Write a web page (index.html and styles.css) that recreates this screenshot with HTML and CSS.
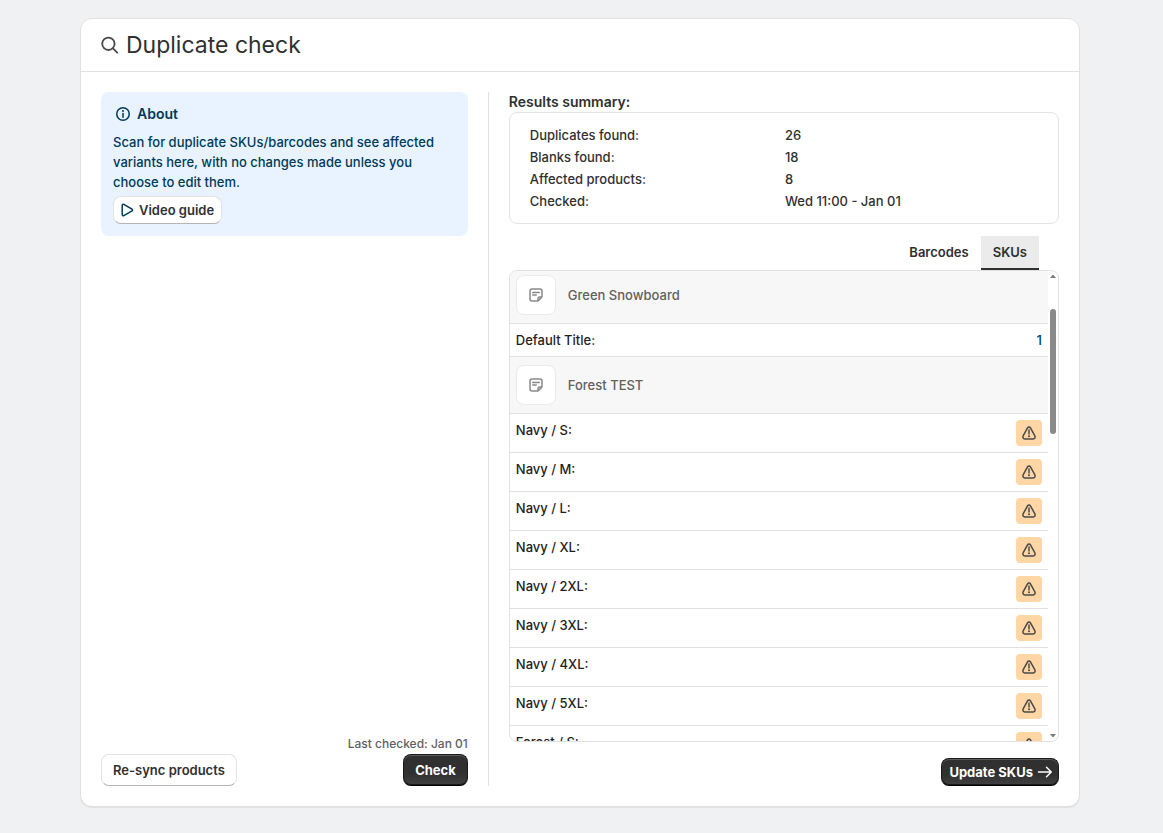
FILE: index.html
```
<!DOCTYPE html>
<html lang="en">
<head>
<meta charset="utf-8">
<meta name="viewport" content="width=device-width, initial-scale=1">
<title>Duplicate check</title>
<link rel="stylesheet" href="styles.css">
</head>
<body>
<svg class="sprite" aria-hidden="true">
  <symbol id="note" viewBox="0 0 20 20">
    <path d="M6 4h8a2 2 0 0 1 2 2v5.2c0 .5-.2 1-.6 1.4l-2.8 2.8c-.4.4-.9.6-1.4.6H6a2 2 0 0 1-2-2V6a2 2 0 0 1 2-2z"/>
    <path d="M6.75 7.5h6.5M6.75 10h3.5M12 15.5v-2c0-.8.7-1.5 1.5-1.5h2"/>
  </symbol>
  <symbol id="warn" viewBox="0 0 20 20">
    <path d="M10 7v4"/>
    <circle class="dot" cx="10" cy="13.2" r="1"/>
    <path d="M8.55 4.8c.65-1.1 2.25-1.1 2.9 0l4.3 7.9c.9 1.7 .1 3.2-1.6 3.2h-8.3c-1.7 0-2.5-1.5-1.6-3.2z"/>
  </symbol>
</svg>
<main class="card">
  <header class="card-header">
    <svg class="icon search-icon" viewBox="0 0 20 20"><circle cx="8.4" cy="8.8" r="6.2"/><path d="M13 13.4l4.2 4.2"/></svg>
    <h1 class="title">Duplicate check</h1>
  </header>
  <div class="card-body">
    <section class="side">
      <div class="about">
        <h2 class="about-title">
          <svg class="icon" viewBox="0 0 20 20"><circle cx="10" cy="10" r="6.25"/><path d="M10 9.5v3.75"/><circle class="dot" cx="10" cy="7" r="1"/></svg>
          About
        </h2>
        <p class="about-text">Scan for duplicate SKUs/barcodes and see affected variants here, with no changes made unless you choose to edit them.</p>
        <button type="button" class="btn btn-small btn-video">
          <svg class="icon play-icon" viewBox="0 0 20 20"><path d="M5.2 5.4v9.2c0 .9.9 1.3 1.6 1l8.2-4.7c.7-.4.7-1.4 0-1.8L6.8 4.4c-.7-.3-1.6.1-1.6 1z"/></svg>
          Video guide
        </button>
      </div>
      <div class="side-footer">
        <p class="last-checked">Last checked: Jan 01</p>
        <div class="actions">
          <button type="button" class="btn">Re-sync products</button>
          <button type="button" class="btn btn-primary">Check</button>
        </div>
      </div>
    </section>
    <div class="divider"></div>
    <section class="results">
      <h2 class="results-title">Results summary:</h2>
      <div class="summary">
        <table class="summary-table">
          <tr><th scope="row">Duplicates found:</th><td>26</td></tr>
          <tr><th scope="row">Blanks found:</th><td>18</td></tr>
          <tr><th scope="row">Affected products:</th><td>8</td></tr>
          <tr><th scope="row">Checked:</th><td>Wed 11:00 - Jan 01</td></tr>
        </table>
      </div>
      <div class="tabs" role="tablist">
        <button type="button" class="tab" role="tab" aria-selected="false">Barcodes</button>
        <button type="button" class="tab tab-active" role="tab" aria-selected="true">SKUs</button>
      </div>
      <div class="list-frame">
        <ul class="list">
          <li class="product"><span class="thumb"><svg class="icon"><use href="#note"/></svg></span>Green Snowboard</li>
          <li class="variant">Default Title:<a class="count" href="#">1</a></li>
          <li class="product"><span class="thumb"><svg class="icon"><use href="#note"/></svg></span>Forest TEST</li>
          <li class="variant">Navy / S:<span class="badge"><svg class="icon"><use href="#warn"/></svg></span></li>
          <li class="variant">Navy / M:<span class="badge"><svg class="icon"><use href="#warn"/></svg></span></li>
          <li class="variant">Navy / L:<span class="badge"><svg class="icon"><use href="#warn"/></svg></span></li>
          <li class="variant">Navy / XL:<span class="badge"><svg class="icon"><use href="#warn"/></svg></span></li>
          <li class="variant">Navy / 2XL:<span class="badge"><svg class="icon"><use href="#warn"/></svg></span></li>
          <li class="variant">Navy / 3XL:<span class="badge"><svg class="icon"><use href="#warn"/></svg></span></li>
          <li class="variant">Navy / 4XL:<span class="badge"><svg class="icon"><use href="#warn"/></svg></span></li>
          <li class="variant">Navy / 5XL:<span class="badge"><svg class="icon"><use href="#warn"/></svg></span></li>
          <li class="variant">Forest / S:<span class="badge"><svg class="icon"><use href="#warn"/></svg></span></li>
        </ul>
        <div class="scrollbar" aria-hidden="true">
          <svg class="arrow" viewBox="0 0 6 3"><path d="M0 3L2.5 0h1L6 3z"/></svg>
          <div class="track"><div class="thumb-bar"></div></div>
          <svg class="arrow" viewBox="0 0 6 3"><path d="M0 0L2.5 3h1L6 0z"/></svg>
        </div>
      </div>
      <div class="results-footer">
        <button type="button" class="btn btn-primary btn-small btn-update">Update SKUs
          <svg class="icon" viewBox="0 0 20 20"><path d="M3.5 10h12.75M11.5 5.25L16.25 10l-4.75 4.75"/></svg>
        </button>
      </div>
    </section>
  </div>
</main>
</body>
</html>
```
FILE: styles.css
```
* { box-sizing: border-box; }

body {
  margin: 0;
  height: 100vh;
  padding: 18px 23px 26px 20px;
  display: flex;
  justify-content: center;
  background: #f0f1f3;
  color: #303030;
  font: 13px/20px Inter, "Liberation Sans", sans-serif;
  font-weight: 450;
}

h1, h2, p, ul { margin: 0; padding: 0; }
button { font: inherit; color: inherit; cursor: pointer; }

.sprite { display: none; }

.icon {
  width: 20px;
  height: 20px;
  flex: none;
  fill: none;
  stroke: currentColor;
  stroke-width: 1.5;
  stroke-linecap: round;
  stroke-linejoin: round;
}

.dot { fill: currentColor; stroke: none; }

.card {
  width: 100%;
  max-width: 1000px;
  display: flex;
  flex-direction: column;
  background: #fff;
  border: 1px solid #e1e2e4;
  border-radius: 12px;
  box-shadow: 0 1px 0 #e1e2e4;
}

.card-header {
  display: flex;
  align-items: center;
  gap: 6px;
  padding: 10px 19px;
  border-bottom: 1px solid #e1e1e1;
}

.search-icon { color: #4a4a4a; stroke-width: 1.8; }
.title { font-size: 23px; line-height: 32px; font-weight: 400; }

.card-body {
  flex: 1;
  min-height: 0;
  display: grid;
  grid-template-columns: 2fr 1px 3fr;
  gap: 20px;
  padding: 20px;
}

.divider { background: #e1e1e1; }

.side {
  display: flex;
  flex-direction: column;
  justify-content: space-between;
}

.about {
  padding: 12px;
  border-radius: 8px;
  background: #e8f3ff;
  color: #003a5a;
}

.about-title {
  display: flex;
  gap: 4px;
  margin-bottom: 8px;
  font-size: 14px;
  font-weight: 600;
}

.about-text { margin-bottom: 4px; }

.last-checked { text-align: right; color: #616161; font-size: 12px; }

.actions { display: flex; justify-content: space-between; }

.btn {
  height: 32px;
  display: flex;
  align-items: center;
  padding: 0 11px;
  border: 1px solid #e3e3e3;
  border-bottom-color: #b5b5b5;
  border-radius: 8px;
  background: #fff;
  color: #303030;
  font-weight: 600;
}

.btn-small { height: 28px; gap: 2px; padding: 0 7px; }
.btn-video { padding-left: 3px; }
.btn-update { padding-right: 3px; }

.play-icon { color: #003a5a; }

.btn-primary {
  color: #fff;
  font-weight: 650;
  border-color: #1a1a1a;
  border-bottom-color: #000;
  background: linear-gradient(#303030 60%, #404040);
  box-shadow: inset 0 1px 0 #5c5c5c, inset 0 -1px 0 #1a1a1a;
}

.results {
  min-height: 0;
  display: flex;
  flex-direction: column;
}

.results-title { font-size: 14px; line-height: 20px; font-weight: 600; }

.summary {
  padding: 10px 18px;
  border: 1px solid #e3e3e3;
  border-radius: 8px;
}

.summary-table {
  width: 100%;
  table-layout: fixed;
  border-spacing: 2px;
}

.summary-table th, .summary-table td {
  padding: 0;
  text-align: left;
  font-weight: inherit;
}

.tabs {
  display: flex;
  justify-content: flex-end;
  margin-top: 12px;
  padding-right: 20px;
}

.tab {
  padding: 6px 12px;
  border: 0;
  border-bottom: 2px solid transparent;
  background: none;
  font-weight: 600;
}

.tab-active { background: #ebebeb; border-bottom-color: #303030; }

.list-frame {
  flex: 1;
  min-height: 0;
  display: flex;
  overflow: hidden;
  border: 1px solid #e1e1e1;
  border-radius: 8px;
}

.list { flex: 1; list-style: none; color: #1f1f1f; }

.product {
  display: flex;
  align-items: center;
  gap: 12px;
  padding: 8px 6px;
  border-bottom: 1px solid #e1e1e1;
  background: #f7f7f7;
  color: #616161;
}

.product:first-child { padding-top: 4px; }

.thumb {
  width: 40px;
  height: 40px;
  display: grid;
  place-items: center;
  border: 1px solid #ebebeb;
  border-radius: 8px;
  background: #fff;
  color: #8a8a8a;
}

.variant {
  display: flex;
  align-items: flex-start;
  justify-content: space-between;
  padding: 6px;
  border-bottom: 1px solid #e1e1e1;
}

.count { color: #003d7a; text-decoration: none; }

.badge {
  width: 26px;
  height: 26px;
  display: grid;
  place-items: center;
  border-radius: 4px;
  background: #ffd6a4;
  color: #4a4a4a;
}

.scrollbar {
  width: 10px;
  display: flex;
  flex-direction: column;
  align-items: center;
  padding: 4px 0;
}

.arrow { width: 6px; height: 3px; fill: #7a7a7a; }

.track { flex: 1; padding-top: 31px; }

.thumb-bar { width: 6px; height: 125px; border-radius: 3px; background: #8a8a8a; }

.results-footer {
  display: flex;
  justify-content: flex-end;
  margin-top: 16px;
}
```
